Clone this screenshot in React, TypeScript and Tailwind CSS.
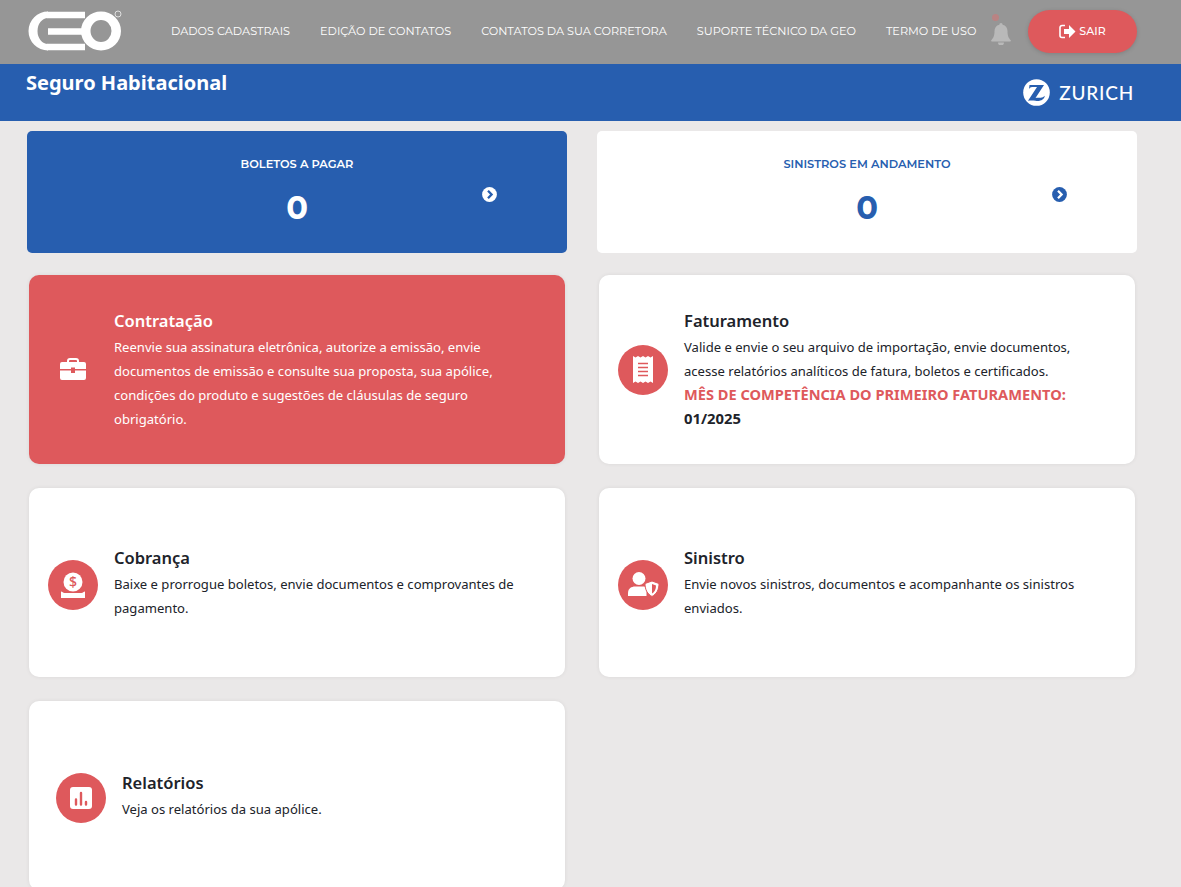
import React from "react";

const NAV = ["DADOS CADASTRAIS", "EDIÇÃO DE CONTATOS", "CONTATOS DA SUA CORRETORA", "SUPORTE TÉCNICO DA GEO", "TERMO DE USO"];

function GeoLogo() {
  return (
    <svg width="100" height="44" viewBox="0 0 100 44" className="shrink-0">
      <path d="M21 2.500A19.500 19.500 0 0 0 21 41.500V35A10.500 13 0 0 1 21 9Z" fill="#fff" />
      <path d="M20 6H58M21 22.500H56M20 38H58" fill="none" stroke="#fff" strokeWidth="6.500" />
      <path fillRule="evenodd" d="M74 2.500A20 19.500 0 0 1 74 41.500A20 19.500 0 0 1 74 2.500ZM74 11A10.500 11 0 0 0 74 33A10.500 11 0 0 0 74 11Z" fill="#fff" />
      <circle cx="91" cy="5" r="3" fill="none" stroke="#fff" strokeWidth="0.7" />
    </svg>
  );
}

function ZurichMark() {
  return (
    <svg width="27" height="27" viewBox="0 0 27 27" className="shrink-0">
      <circle cx="13.500" cy="13.500" r="13.300" fill="#fff" />
      <path d="M6.500 6H21L12.500 19C16 18.500 19.500 19.500 21.800 16.800C21.500 20.500 17 22.800 12.500 21.800C10 21.300 7.500 21.300 5 21.800L14 8H9C7.800 8 6.800 8.800 6 10Z" fill="#275eaf" />
    </svg>
  );
}

function Bell() {
  return (
    <div className="relative ml-[15px] w-[20px] h-[34px] shrink-0">
      <svg width="20" height="22" viewBox="0 0 20 22" className="absolute left-0 top-[9px]">
        <path d="M10 0c1 0 1.600.8 1.600 1.700C14.800 2.400 16.500 5 16.500 8c0 5 1.200 7 3.200 9.200.5.6.1 1.300-.6 1.300H.9c-.7 0-1.100-.7-.6-1.300C2.300 15 3.500 13 3.500 8c0-3 1.700-5.600 4.900-6.300C8.400.8 9 0 10 0ZM7 19.500h6a3 3 0 0 1-6 0Z" fill="#b9b9b9" />
      </svg>
      <span className="absolute left-[1px] top-0 w-[7px] h-[7px] rounded-full bg-[#b98383]" />
    </div>
  );
}

function Chevron({ dark }: { dark?: boolean }) {
  const bg = dark ? "#275eaf" : "#fff";
  const fg = dark ? "#fff" : "#275eaf";
  return (
    <svg width="15" height="15" viewBox="0 0 15 15" className="block">
      <circle cx="7.500" cy="7.500" r="7.400" fill={bg} />
      <path d="M6 3.800 9.600 7.500 6 11.200" fill="none" stroke={fg} strokeWidth="2.300" />
    </svg>
  );
}

function Stat({ label, blue }: { label: string; blue?: boolean }) {
  return (
    <div className={`h-[122px] rounded-[5px] pt-[26px] pl-[213px] flex ${blue ? "bg-[#275eaf] text-white" : "bg-white text-[#275eaf]"}`}>
      <div className="w-[114px] flex flex-col items-center font-['Montserrat','Inter','Liberation_Sans',sans-serif]">
        <div className="text-[11.400px] leading-[14px] font-semibold whitespace-nowrap">{label}</div>
        <div className="mt-[18px] text-[32px] leading-[38px] font-bold">0</div>
      </div>
      <div className="ml-[128px] mt-[30px] h-[15px]">
        <Chevron dark={!blue} />
      </div>
    </div>
  );
}

function Card({ icon, title, pl = "pl-[19px]", gap = "gap-[16px]", red, children }: { icon: React.ReactNode; title: string; pl?: string; gap?: string; red?: boolean; children: React.ReactNode }) {
  return (
    <div className={`h-[189px] rounded-[10px] flex items-center ${pl} ${gap} pr-[40px] shadow-[0_0_4px_rgba(0,0,0,0.07)] ${red ? "bg-[#de595c] text-white" : "bg-white text-[#20232a]"}`}>
      {icon}
      <div className="min-w-0 flex-1">
        <div className="text-[16.500px] leading-[24px] font-semibold mb-[2px]">{title}</div>
        <div className="text-[13.070px] leading-[24px]">{children}</div>
      </div>
    </div>
  );
}

function Circle({ low, children }: { low?: boolean; children: React.ReactNode }) {
  return <div className={`w-[50px] h-[50px] rounded-full bg-[#de595c] flex items-center justify-center shrink-0 ${low ? "mt-[4px]" : ""}`}>{children}</div>;
}

export default function App() {
  return (
    <div className="h-[887px] overflow-hidden bg-[#eae8e8] font-['Noto_Sans','Open_Sans',sans-serif]">
      <header className="h-[64px] bg-[#969696] flex items-center pl-[27px] pr-[44px] pb-[2px]">
        <GeoLogo />
        <nav className="ml-[44px] flex gap-[30px] text-[11.290px] text-white font-['Montserrat','Inter','Liberation_Sans',sans-serif] whitespace-nowrap">
          {NAV.map((n) => <span key={n}>{n}</span>)}
        </nav>
        <Bell />
        <button className="ml-auto w-[109px] h-[43px] rounded-full bg-[#de595c] text-white text-[11px] font-medium flex items-center justify-center gap-[3px] shadow-[0_1px_4px_rgba(0,0,0,0.15)] font-['Montserrat','Inter','Liberation_Sans',sans-serif]">
          <svg width="17" height="15" viewBox="0 0 17 15">
            <path d="M6 1.500H3a2 2 0 0 0-2 2v8a2 2 0 0 0 2 2h3" fill="none" stroke="#fff" strokeWidth="1.600" />
            <path d="M5 5h5V1l6.500 6.500L10 14v-4H5Z" fill="#fff" />
          </svg>
          SAIR
        </button>
      </header>
      <div className="h-[57px] bg-[#275eaf] flex items-start justify-between pl-[26px] pr-[47px]">
        <h1 className="text-[20px] leading-[38px] font-bold text-white">Seguro Habitacional</h1>
        <div className="flex items-center gap-[9px] mt-[15px]">
          <ZurichMark />
          <span className="text-white text-[19px] leading-[27px] tracking-[0.800px] font-medium font-['Lato',sans-serif]">ZURICH</span>
        </div>
      </div>
      <main className="pl-[27px] pr-[44px] pt-[10px]">
        <div className="grid grid-cols-2 gap-x-[30px]">
          <Stat label="BOLETOS A PAGAR" blue />
          <Stat label="SINISTROS EM ANDAMENTO" />
        </div>
        <div className="grid grid-cols-2 gap-x-[34px] gap-y-[24px] mt-[22px] px-[2px]">
          <Card red title="Contratação" pl="pl-[31px]" gap="gap-[28px]"
            icon={
              <svg width="26" height="22" viewBox="0 0 26 22" className="shrink-0 -mt-[2px]">
                <path d="M8 5V3a2 2 0 0 1 2-2h6a2 2 0 0 1 2 2v2" fill="none" stroke="#fff" strokeWidth="2" />
                <path d="M2 4h22a2 2 0 0 1 2 2v5H15V9.500h-4V11H0V6a2 2 0 0 1 2-2ZM0 12.500h11V15h4v-2.500h11V20a2 2 0 0 1-2 2H2a2 2 0 0 1-2-2Z" fill="#fff" />
              </svg>
            }>
            Reenvie sua assinatura eletrônica, autorize a emissão, envie documentos de emissão e consulte sua proposta, sua apólice, condições do produto e sugestões de cláusulas de seguro obrigatório.
          </Card>
          <Card title="Faturamento"
            icon={
              <Circle>
                <svg width="20" height="27" viewBox="0 0 20 27">
                  <path d="M0 0l2.500 1.500L5 0l2.500 1.500L10 0l2.500 1.500L15 0l2.500 1.500L20 0v27l-2.500-1.500L15 27l-2.500-1.500L10 27l-2.500-1.500L5 27l-2.500-1.500L0 27Z" fill="#fff" />
                  <path d="M5 7.500h10M5 11.500h10M5 15.500h10M5 19.500h10" stroke="#de595c" strokeWidth="1.300" />
                </svg>
              </Circle>
            }>
            Valide e envie o seu arquivo de importação, envie documentos, acesse relatórios analíticos de fatura, boletos e certificados.
            <div className="font-bold text-[14.600px] leading-[22px] mb-[2px] text-[#de595c]">MÊS DE COMPETÊNCIA DO PRIMEIRO FATURAMENTO:</div>
            <div className="font-bold text-[14.800px] leading-[22px] mb-[2px]">01/2025</div>
          </Card>
          <Card title="Cobrança"
            icon={
              <Circle low>
                <svg width="24" height="26" viewBox="0 0 24 26">
                  <circle cx="12" cy="10" r="9.500" fill="#fff" />
                  <text x="12" y="15" textAnchor="middle" fontSize="14" fontWeight="500" fill="#de595c" fontFamily="Noto Sans">$</text>
                  <path d="M0 19.500c1.500 0 2 1.500 3.500 1.500h17c1.500 0 2-1.500 3.500-1.500V26H0Z" fill="#fff" />
                </svg>
              </Circle>
            }>
            Baixe e prorrogue boletos, envie documentos e comprovantes de pagamento.
          </Card>
          <Card title="Sinistro"
            icon={
              <Circle low>
                <svg width="31" height="25" viewBox="0 0 31 25">
                  <circle cx="11" cy="6.500" r="6.500" fill="#fff" />
                  <path d="M0 24v-3c0-4.500 3.500-6.500 7-6.500h8c1.500 0 2.500.3 3.500.8V24Z" fill="#fff" />
                  <path d="M24 9l7 2.500c0 6.500-2.500 10.500-7 13-4.500-2.500-7-6.500-7-13Z" fill="#fff" stroke="#de595c" strokeWidth="1" />
                  <path d="M24 12v9.500c2.500-1.500 4-4 4-8Z" fill="#de595c" />
                </svg>
              </Circle>
            }>
            Envie novos sinistros, documentos e acompanhante os sinistros enviados.
          </Card>
          <Card title="Relatórios" pl="pl-[27px]"
            icon={
              <Circle low>
                <svg width="22" height="22" viewBox="0 0 22 22">
                  <rect width="22" height="22" rx="3" fill="#fff" />
                  <path d="M6 12.500v5M11 6v11.500M16 15v2.500" stroke="#de595c" strokeWidth="2.400" strokeLinecap="round" />
                </svg>
              </Circle>
            }>
            Veja os relatórios da sua apólice.
          </Card>
        </div>
      </main>
    </div>
  );
}
